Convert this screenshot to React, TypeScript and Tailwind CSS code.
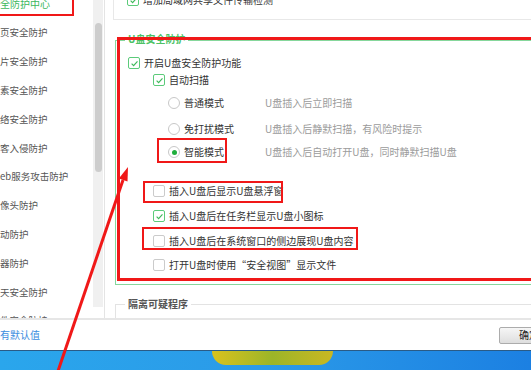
import React from 'react';

const sideItems = [
  '页安全防护',
  '片安全防护',
  '素安全防护',
  '络安全防护',
  '客入侵防护',
  'eb服务攻击防护',
  '像头防护',
  '动防护',
  '器防护',
  '天安全防护',
  '件安全防护',
];

const Check = ({ on }: { on?: boolean }) => (
  <span
    className={`flex h-3 w-3 shrink-0 items-center justify-center rounded-[2px] border bg-white ${
      on ? 'border-[#5ccb7a]' : 'border-[#cbcbcb]'
    }`}
  >
    {on && (
      <svg viewBox="0 0 10 10" className="h-[9px] w-[9px]">
        <polyline points="1.8,5.2 4,7.3 8.3,2.6" fill="none" stroke="#3fb95b" strokeWidth="1.3" />
      </svg>
    )}
  </span>
);

const Radio = ({ on }: { on?: boolean }) => (
  <span className="flex h-3 w-3 shrink-0 items-center justify-center rounded-full border border-[#c8c8c8] bg-white">
    {on && <span className="h-[5px] w-[5px] rounded-full bg-[#1fae3c]" />}
  </span>
);

const CheckRow = ({ on, text, className }: { on?: boolean; text: string; className: string }) => (
  <div className={`flex h-4 items-center gap-1 ${className}`}>
    <Check on={on} />
    <span className="whitespace-nowrap text-[#333]">{text}</span>
  </div>
);

const RadioRow = ({ on, text, desc, className }: { on?: boolean; text: string; desc: string; className: string }) => (
  <div className={`flex h-4 items-center pl-[52px] ${className}`}>
    <div className="flex w-[97px] items-center gap-1">
      <Radio on={on} />
      <span className="whitespace-nowrap text-[#333]">{text}</span>
    </div>
    <span className="whitespace-nowrap text-[#9b9b9b]">{desc}</span>
  </div>
);

export default function App() {
  return (
    <div className="relative flex h-[370px] w-[531px] flex-col overflow-hidden bg-white font-['Noto_Sans_CJK_SC',sans-serif] text-[10px] leading-none">
      <div className="flex h-[318px] shrink-0 overflow-hidden">
        {/* left nav */}
        <div className="w-[93px] shrink-0 overflow-hidden">
          <div className="mt-[-10px]">
            <div className="flex h-[28.8px] items-center whitespace-nowrap text-[10px] text-[#3cb85c]">全防护中心</div>
            {sideItems.map((t) => (
              <div key={t} className="flex h-[28.8px] items-center whitespace-nowrap text-[9.5px] text-[#555]">
                {t}
              </div>
            ))}
          </div>
        </div>
        <div className="flex w-[11px] shrink-0 flex-col">
          <div className="flex h-[307px] w-[10px] justify-center bg-[#f0f0f0] pt-[23px]">
            <div className="h-[149px] w-[7px] rounded-full bg-[#cdcdcd]" />
          </div>
        </div>
        {/* content */}
        <div className="flex min-w-0 flex-1 flex-col overflow-hidden border-l border-[#e4e4e4]">
          <div className="ml-[8px] mr-[-20px] mt-[-20px] h-[40px] shrink-0 border border-[#e8e8e8]">
            <div className="ml-[13px] mt-[11px] flex h-4 items-center gap-[4px]">
              <Check on />
              <span className="whitespace-nowrap text-[#333]">增加局域网共享文件传输检测</span>
            </div>
          </div>

          <div className="relative ml-[10px] mr-[-20px] mt-[20px] shrink-0 border border-[#86d79c] pb-[11px]">
            <span className="absolute left-[9px] top-[-7px] bg-white px-[3px] font-bold text-[#4cc265]">U盘安全防护</span>
            <CheckRow on text="开启U盘安全防护功能" className="mt-[14px] pl-[12px]" />
            <CheckRow on text="自动扫描" className="mt-[1px] pl-[37px]" />
            <RadioRow text="普通模式" desc="U盘插入后立即扫描" className="mt-[7px]" />
            <RadioRow text="免打扰模式" desc="U盘插入后静默扫描，有风险时提示" className="mt-[10px]" />
            <RadioRow on text="智能模式" desc="U盘插入后自动打开U盘，同时静默扫描U盘" className="mt-[7px]" />
            <CheckRow text="插入U盘后显示U盘悬浮窗" className="mt-[23px] pl-[37px]" />
            <CheckRow on text="插入U盘后在任务栏显示U盘小图标" className="mt-[9px] pl-[37px]" />
            <CheckRow text="插入U盘后在系统窗口的侧边展现U盘内容" className="mt-[9px] pl-[37px]" />
            <CheckRow text="打开U盘时使用“安全视图”显示文件" className="mt-[8px] pl-[37px]" />
          </div>

          <div className="relative ml-[10px] mr-[-20px] mt-[19px] h-[40px] shrink-0 border border-[#e3e3e3]">
            <span className="absolute left-[9px] top-[-6px] bg-white px-[3px] font-bold text-[#555]">隔离可疑程序</span>
          </div>
        </div>
      </div>

      {/* bottom bar */}
      <div className="flex h-[32px] shrink-0 items-center border-t-2 border-[#e6e6e6] bg-white">
        <span className="whitespace-nowrap text-[#3b8de0]">有默认值</span>
        <div className="ml-auto mr-[-28px] flex h-[17px] w-[60px] items-center justify-center rounded-[2px] border border-[#acacac] bg-gradient-to-b from-[#f6f6f6] to-[#dedede] text-[#222]">
          确定
        </div>
      </div>

      {/* desktop strip */}
      <div className="h-[20px] shrink-0 border-t border-[#2a5b86] bg-gradient-to-r from-[#2aa6ec] via-[#2b9ae8] to-[#1c80e2]">
        <div className="ml-[212px] h-[14px] w-[121px] rounded-b-full bg-gradient-to-r from-[#d9c21d] via-[#9cb528] to-[#c9b722]" />
      </div>

      {/* annotations */}
      <div className="pointer-events-none absolute left-[-10px] top-[-10px] h-[26px] w-[84px] border-2 border-[#f01818]" />
      <div className="pointer-events-none absolute left-[117px] top-[37px] h-[244px] w-[430px] border-[3px] border-[#f01818]" />
      <div className="pointer-events-none absolute left-[157px] top-[138px] h-[25px] w-[70px] border-2 border-[#f01818]" />
      <div className="pointer-events-none absolute left-[143px] top-[181px] h-[22px] w-[140px] border-2 border-[#f01818]" />
      <div className="pointer-events-none absolute left-[142px] top-[227px] h-[23px] w-[216px] border-2 border-[#f01818]" />
      <svg className="pointer-events-none absolute left-0 top-0" width="531" height="370" viewBox="0 0 531 370">
        <line x1="57" y1="374" x2="123" y2="180" stroke="#f01818" strokeWidth="3" />
        <polygon points="128,167 127.5,181.5 118.8,178.5" fill="#f01818" />
      </svg>
    </div>
  );
}
